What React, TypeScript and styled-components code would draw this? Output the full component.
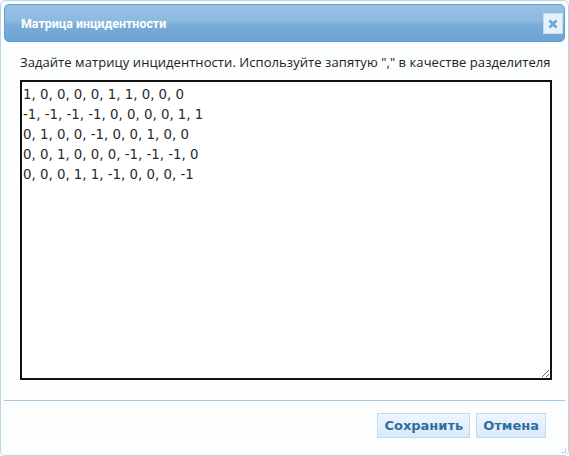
import React from 'react'
import styled, { createGlobalStyle } from 'styled-components'

const GlobalStyle = createGlobalStyle`
	html, body {
		margin: 0;
		padding: 0;
		background: #ffffff;
	}
`

const matrix = `1, 0, 0, 0, 0, 1, 1, 0, 0, 0
-1, -1, -1, -1, 0, 0, 0, 0, 1, 1
0, 1, 0, 0, -1, 0, 0, 1, 0, 0
0, 0, 1, 0, 0, 0, -1, -1, -1, 0
0, 0, 0, 1, 1, -1, 0, 0, 0, -1
`

const App: React.FC = () => {
	return (
		<>
			<GlobalStyle />
			<StyledDialog>
				<StyledTitleBar>
					<StyledTitle>Матрица инцидентности</StyledTitle>
					<StyledClose aria-label="close">
						<svg width="10" height="10" viewBox="0 0 10 10">
							<path d="M1.5 1.5 L8.5 8.5 M8.5 1.5 L1.5 8.5" stroke="#6aa5d6" strokeWidth="2.6" strokeLinecap="butt" />
						</svg>
					</StyledClose>
				</StyledTitleBar>
				<StyledContent>
					<StyledHint>Задайте матрицу инцидентности. Используйте запятую "," в качестве разделителя</StyledHint>
					<StyledTextArea defaultValue={matrix} spellCheck={false} />
				</StyledContent>
				<StyledButtonPane>
					<StyledButton>Сохранить</StyledButton>
					<StyledButton>Отмена</StyledButton>
				</StyledButtonPane>
				<StyledGrip />
			</StyledDialog>
		</>
	)
}

const StyledDialog = styled.div`
	position: relative;
	box-sizing: border-box;
	width: 569px;
	height: 456px;
	padding: 3px;
	border: 1px solid #b9d5ea;
	border-radius: 5px;
	background: #fcfdfd;
	display: flex;
	flex-direction: column;
	font-family: "Open Sans", "Noto Sans", sans-serif;
`

const StyledTitleBar = styled.div`
	box-sizing: border-box;
	height: 38px;
	flex-shrink: 0;
	display: flex;
	align-items: center;
	justify-content: space-between;
	padding: 0 1px 0 16px;
	border: 1px solid #5e9ed3;
	border-radius: 5px;
	background: linear-gradient(#98c2e4 0%, #8cb9df 45%, #78abd7 58%, #6ea4d3 100%);
`

const StyledTitle = styled.span`
	color: #ffffff;
	font-family: Roboto, "Open Sans", sans-serif;
	font-size: 12.4px;
	font-weight: 700;
`

const StyledClose = styled.button`
	box-sizing: border-box;
	width: 20px;
	height: 21px;
	padding: 0;
	margin-top: 1px;
	display: flex;
	align-items: center;
	justify-content: center;
	border: 1px solid #c5dbec;
	background: #e6f1fb;
	cursor: pointer;
`

const StyledContent = styled.div`
	flex: 1;
	display: flex;
	flex-direction: column;
	padding: 11px 13px 20px 16px;
`

const StyledHint = styled.div`
	color: #222222;
	font-size: 13px;
	line-height: 18px;
	letter-spacing: 0.07px;
	margin-bottom: 9px;
	white-space: nowrap;
`

const StyledTextArea = styled.textarea`
	flex: 1;
	box-sizing: border-box;
	margin: 0;
	padding: 3px 1px 1px;
	border: 2px solid #111111;
	background: #ffffff;
	color: #2a2a2a;
	font-family: "DejaVu Sans", Verdana, sans-serif;
	font-size: 13.33px;
	line-height: 20px;
	resize: both;
	outline: none;
`

const StyledButtonPane = styled.div`
	display: flex;
	flex-shrink: 0;
	justify-content: flex-end;
	gap: 6px;
	height: 52px;
	box-sizing: border-box;
	padding: 12px 19px 0 0;
	border-top: 1px solid #a6c9e2;
`

const StyledButton = styled.button`
	box-sizing: border-box;
	height: 25px;
	padding: 0 6px;
	border: 1px solid #c5dbec;
	background: linear-gradient(#eef6fe 0%, #e3f0fc 50%, #d8eafb 100%);
	color: #2e6e9e;
	font-family: "DejaVu Sans", Verdana, sans-serif;
	font-size: 13px;
	font-weight: 700;
	cursor: pointer;
`

const StyledGrip = styled.div`
	position: absolute;
	right: 2px;
	bottom: 2px;
	width: 4px;
	height: 4px;
	border-right: 1px solid #b9d5ea;
	border-bottom: 1px solid #b9d5ea;
`

export default App
